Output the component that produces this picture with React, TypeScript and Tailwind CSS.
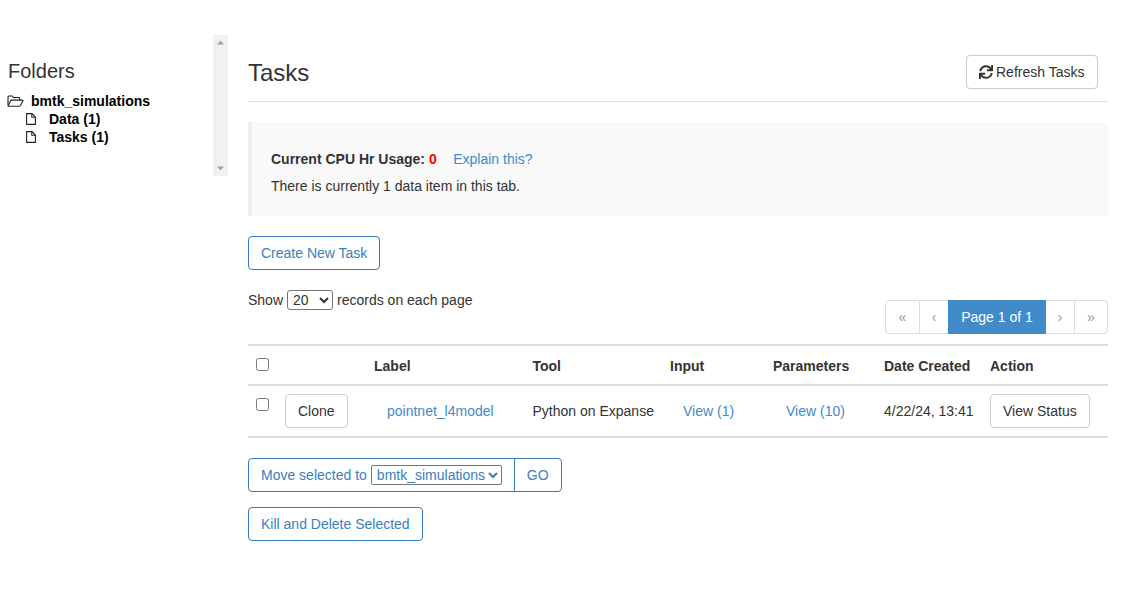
import React from 'react';
import { FaSync } from 'react-icons/fa';

const linkBtn = 'inline-block h-[34px] px-3 leading-[32px] border border-[#337ab7] rounded text-[#3a80bf] bg-white';
const plainBtn = 'inline-block h-[34px] px-3 leading-[32px] border border-[#ccc] rounded text-[#333] bg-white';
const pageCell = 'h-[34px] leading-[32px] border border-[#ddd] text-[#999] text-center bg-white';

function FolderOpenIcon() {
  return (
    <svg width="17" height="12" viewBox="0 0 17 12" fill="none" stroke="#222" strokeWidth="1.1" className="mr-[7px] shrink-0">
      <path d="M1 10.5V2a1 1 0 0 1 1-1h3.2l1.2 1.5h5.4a1 1 0 0 1 1 1V5" />
      <path d="M1.1 10.8 3.6 5.8a1.4 1.4 0 0 1 1.1-.7h10.6c.6 0 .9.4.6.9l-2.4 4.6a1.4 1.4 0 0 1-1.1.7H1.8c-.5 0-.9-.1-.7-.5z" />
    </svg>
  );
}

function FileIcon() {
  return (
    <svg width="10" height="12" viewBox="0 0 10 12" fill="none" stroke="#222" strokeWidth="1.1" className="mr-[13px] shrink-0">
      <path d="M.6.6h5.4l3.4 3.4v7.4H.6z" />
      <path d="M5.8.6v3.6h3.6" />
    </svg>
  );
}

function Sidebar() {
  return (
    <aside className="w-[228px] shrink-0 pt-[35px] flex">
      <div className="w-[213px] h-[141px] pl-2 pt-[23px] text-black">
        <h4 className="text-[20px] leading-[26px] text-[#333] mb-[8px]">Folders</h4>
        <ul className="font-bold leading-[18px]">
          <li className="flex items-center -ml-[1px]">
            <FolderOpenIcon />
            <span>bmtk_simulations</span>
          </li>
          <li className="flex items-center pl-[18px]">
            <FileIcon />
            <span>Data (1)</span>
          </li>
          <li className="flex items-center pl-[18px]">
            <FileIcon />
            <span>Tasks (1)</span>
          </li>
        </ul>
      </div>
      {/* scrollbar */}
      <div className="w-[15px] h-[141px] bg-[#f1f1f1] flex flex-col items-center justify-between py-[5px]">
        <svg width="7" height="5" viewBox="0 0 7 5"><path d="M3.5 0.5 7 4.5H0z" fill="#a3a3a3" /></svg>
        <svg width="7" height="5" viewBox="0 0 7 5"><path d="M3.5 4.5 7 0.5H0z" fill="#a3a3a3" /></svg>
      </div>
    </aside>
  );
}

function TasksTable() {
  return (
    <table className="w-[860px] table-fixed border-collapse border-y-2 border-[#ddd] text-[#333] text-left">
      <colgroup>
        <col className="w-[29px]" />
        <col className="w-[89px]" />
        <col className="w-[158.5px]" />
        <col className="w-[137.5px]" />
        <col className="w-[103px]" />
        <col className="w-[111px]" />
        <col className="w-[106px]" />
        <col className="w-[126px]" />
      </colgroup>
      <thead>
        <tr className="border-b-2 border-[#ddd] h-[40px] font-bold">
          <th className="pl-2 pb-[1px]"><input type="checkbox" className="block w-[13px] h-[13px]" /></th>
          <th />
          <th className="px-2 pt-[2px]">Label</th>
          <th className="px-2 pt-[2px]">Tool</th>
          <th className="px-2 pt-[2px]">Input</th>
          <th className="px-2 pt-[2px]">Parameters</th>
          <th className="px-2 pt-[2px] whitespace-nowrap">Date Created</th>
          <th className="px-2 pt-[2px]">Action</th>
        </tr>
      </thead>
      <tbody>
        <tr className="h-[52px]">
          <td className="pl-2 pb-[13px]"><input type="checkbox" className="block w-[13px] h-[13px]" /></td>
          <td className="px-2"><button className={plainBtn}>Clone</button></td>
          <td className="px-2"><a className="px-[13px] text-[#428bca]">pointnet_l4model</a></td>
          <td className="px-2 whitespace-nowrap">Python on Expanse</td>
          <td className="px-2"><a className="px-[13px] text-[#428bca]">View (1)</a></td>
          <td className="px-2"><a className="px-[13px] text-[#428bca]">View (10)</a></td>
          <td className="px-2 whitespace-nowrap">4/22/24, 13:41</td>
          <td className="px-2"><button className={plainBtn}>View Status</button></td>
        </tr>
      </tbody>
    </table>
  );
}

export default function App() {
  return (
    <div className="flex w-[1144px] h-[602px] bg-white text-[14px] leading-[20px] text-[#333] font-['Liberation_Sans',Arial,sans-serif]">
      <Sidebar />
      <main className="w-[860px] ml-[20px]">
        {/* header */}
        <div className="h-[102px] border-b border-[#ddd] pt-[55px] flex justify-between items-start">
          <h2 className="text-[24px] leading-[34px] mt-[1px]">Tasks</h2>
          <button className="w-[132px] h-[34px] pl-3 mr-[10px] border border-[#ccc] rounded text-[#333] bg-white flex items-center whitespace-nowrap">
            <FaSync className="w-[14px] h-[14px] mr-[3px]" />
            Refresh Tasks
          </button>
        </div>

        {/* usage callout */}
        <section className="mt-[20px] h-[94px] bg-[#f9f9f9] border-l-4 border-[#eee] pl-[19px] pt-[27px]">
          <p className="leading-[20px]">
            <b>Current CPU Hr Usage: </b>
            <b className="text-[#f00]">0</b>
            <a className="ml-[16.5px] text-[#428bca]">Explain this?</a>
          </p>
          <p className="mt-[7px]">There is currently 1 data item in this tab.</p>
        </section>

        <button className={`${linkBtn} mt-[20px] block`}>Create New Task</button>

        <div className="flex justify-between mt-[20px]">
          <div className="flex items-center h-[22px] -mt-px">
            <span>Show</span>
            <select className="ml-[4px] mr-[4px] w-[46px] h-[20px] border border-[#767676] rounded-[3px] bg-white text-[#333] px-px" defaultValue="20">
              <option>20</option>
            </select>
            <span>records on each page</span>
          </div>
          <div className="flex mt-[10px]">
            <span className={`${pageCell} w-[35px] rounded-l`}>«</span>
            <span className={`${pageCell} w-[30px] -ml-px`}>‹</span>
            <span className="h-[34px] leading-[34px] w-[98px] -ml-px bg-[#428bca] text-white text-center">Page 1 of 1</span>
            <span className={`${pageCell} w-[29px] border-l-0`}>›</span>
            <span className={`${pageCell} w-[34px] -ml-px rounded-r`}>»</span>
          </div>
        </div>

        <div className="mt-[10px]"><TasksTable /></div>

        <div className="mt-[20px] flex">
          <div className={`${linkBtn} rounded-r-none flex items-center`}>
            <span>Move selected to</span>
            <select className="ml-[4px] w-[131px] h-[20px] border border-[#767676] rounded-[2px] bg-white text-[#3a80bf] pl-[1px]" defaultValue="bmtk_simulations">
              <option>bmtk_simulations</option>
            </select>
          </div>
          <button className={`${linkBtn} rounded-l-none -ml-px`}>GO</button>
        </div>

        <button className={`${linkBtn} mt-[15px] block`}>Kill and Delete Selected</button>
      </main>
    </div>
  );
}
